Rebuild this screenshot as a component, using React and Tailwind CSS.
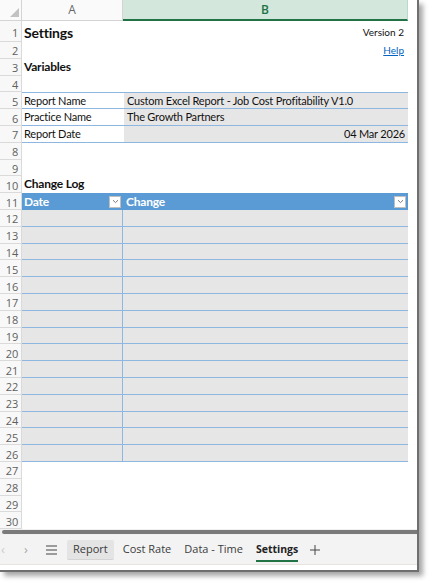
import React from 'react';

const ROW_H = 'h-[16.8px]';

const RowNum = ({ n }) => (
  <div className="w-[22px] shrink-0 h-full border-r border-b border-[#dadada] bg-[#f8f8f8] flex items-center justify-end pr-[3px] pt-[2px] text-[11px] text-[#5f5f5f] font-['Open_Sans',sans-serif] leading-none">
    {n}
  </div>
);

const Row = ({ n, tall, className = '', children }) => (
  <div className={`flex ${tall ? 'h-[21px]' : ROW_H}`}>
    <RowNum n={n} />
    <div className={`flex w-[386px] shrink-0 ${className}`}>{children}</div>
  </div>
);

const Filter = () => (
  <span className="w-[12px] h-[12px] bg-white border border-[#bfbfbf] flex items-center justify-center shrink-0">
    <svg width="7" height="5" viewBox="0 0 7 5">
      <path d="M1 1.2 L3.5 3.6 L6 1.2" fill="none" stroke="#7a7a7a" strokeWidth="1" />
    </svg>
  </span>
);

const App = () => {
  const tableRows = Array.from({ length: 15 }, (_, i) => i + 12);
  const emptyRows = [27, 28, 29, 30];

  return (
    <div className="w-[432px] h-[585px] bg-white relative overflow-hidden font-['Lato',sans-serif] text-[11px] tracking-[-0.2px] text-[#111]">
      <div className="w-[419px] h-[572px] border-r-2 border-b-2 border-[#6f6f6f] shadow-[4px_4px_5px_rgba(0,0,0,0.35)] flex flex-col bg-white">
        {/* column headers */}
        <div className="flex h-[21px] shrink-0 tracking-normal">
          <div className="w-[22px] shrink-0 border-r border-b border-[#d4d4d4] bg-[#fafafa] relative">
            <svg className="absolute right-[2px] bottom-[3px]" width="9" height="9" viewBox="0 0 9 9">
              <path d="M9 0 L9 9 L0 9 Z" fill="#c2c2c2" />
            </svg>
          </div>
          <div className="w-[101px] shrink-0 border-r border-b border-[#d4d4d4] bg-[#fafafa] flex items-center justify-center text-[12px] text-[#666] font-['Open_Sans',sans-serif]">
            A
          </div>
          <div className="w-[285px] shrink-0 border-r border-[#bcd8c7] border-b-2 border-b-[#217346] bg-[#d3e7dc] flex items-center justify-center text-[12px] text-[#217346] font-semibold font-['Open_Sans',sans-serif]">
            B
          </div>
          <div className="flex-1" />
        </div>

        {/* sheet body */}
        <div className="flex flex-col">
          <Row n={1} tall>
            <div className="w-[101px] flex items-center pl-[2px] pt-[1px] text-[14px] font-bold">Settings</div>
            <div className="flex-1 flex items-center justify-end pr-[4px] pt-[1px] text-[10px] tracking-normal">Version 2</div>
          </Row>
          <Row n={2}>
            <div className="w-[101px]" />
            <div className="flex-1 flex items-end justify-end pr-[4px] pb-[1px] text-[10px] tracking-normal text-[#0563c1] underline">Help</div>
          </Row>
          <Row n={3}>
            <div className="w-[101px] flex items-center pl-[2px] text-[12px] font-bold whitespace-nowrap">Variables</div>
          </Row>
          <Row n={4} />
          <Row n={5} className="border-t border-b border-[#8db6e0]">
            <div className="w-[101px] flex items-center pl-[2px]">Report Name</div>
            <div className="flex-1 flex items-center pl-[3px] bg-[#e7e6e6] border-l border-white whitespace-nowrap">
              Custom Excel Report - Job Cost Profitability V1.0
            </div>
          </Row>
          <Row n={6} className="border-b border-[#8db6e0]">
            <div className="w-[101px] flex items-center pl-[2px]">Practice Name</div>
            <div className="flex-1 flex items-center pl-[3px] bg-[#e7e6e6] border-l border-white">The Growth Partners</div>
          </Row>
          <Row n={7} className="border-b border-[#8db6e0]">
            <div className="w-[101px] flex items-center pl-[2px]">Report Date</div>
            <div className="flex-1 flex items-center justify-end pr-[3px] bg-[#e7e6e6] border-l border-white">04 Mar 2026</div>
          </Row>
          <Row n={8} />
          <Row n={9} />
          <Row n={10}>
            <div className="w-[101px] flex items-end pl-[2px] text-[12px] font-bold whitespace-nowrap">Change Log</div>
          </Row>
          <Row n={11} className="bg-[#5b9bd5] text-white font-bold text-[12px]">
            <div className="w-[101px] flex items-center justify-between pl-[2px] pr-[2px]">
              <span>Date</span>
              <Filter />
            </div>
            <div className="flex-1 flex items-center justify-between pl-[3px] pr-[2px]">
              <span>Change</span>
              <Filter />
            </div>
          </Row>
          {tableRows.map((n) => (
            <Row key={n} n={n} className="bg-[#e7e6e6] border-b border-[#8db6e0]">
              <div className="w-[101px] border-r border-[#8db6e0]" />
              <div className="flex-1" />
            </Row>
          ))}
          {emptyRows.map((n) => (
            <Row key={n} n={n} />
          ))}
        </div>

        {/* horizontal scroll */}
        <div className="h-[6px] shrink-0 bg-[#f0f0f0] flex items-center pl-[2px]">
          <div className="h-[4px] flex-1 rounded-l-full bg-[#7a7a7a]" />
        </div>

        {/* sheet tabs */}
        <div className="flex-1 bg-[#f3f3f3] border-b border-[#e8e3dc] flex items-center font-['Open_Sans',sans-serif] text-[11px] tracking-normal text-[#3b3b3b]">
          <span className="w-[24px] pl-[1px] text-[#cccccc] text-[13px] leading-none">‹</span>
          <span className="w-[22px] text-[#a8a8a8] text-[13px] leading-none">›</span>
          <svg width="12" height="10" viewBox="0 0 12 10">
            <path d="M0 1 H11 M0 5 H11 M0 9 H11" stroke="#444" strokeWidth="1.2" />
          </svg>
          <span className="ml-[9px] h-[20px] px-[6px] rounded-[2px] bg-[#e4e4e4] border-b border-[#d4d4d4] flex items-center">Report</span>
          <span className="ml-[9px]">Cost Rate</span>
          <span className="ml-[13px]">Data - Time</span>
          <span className="ml-[13px] relative font-bold text-[10.5px] text-[#222]">
            Settings
            <span className="absolute left-0 right-0 -bottom-[5px] h-[2px] bg-[#217346]" />
          </span>
          <svg className="ml-[12px]" width="10" height="10" viewBox="0 0 10 10">
            <path d="M5 0 V10 M0 5 H10" stroke="#444" strokeWidth="1" />
          </svg>
        </div>
        <div className="h-[5px] shrink-0 bg-white" />
      </div>
    </div>
  );
};

export default App;
